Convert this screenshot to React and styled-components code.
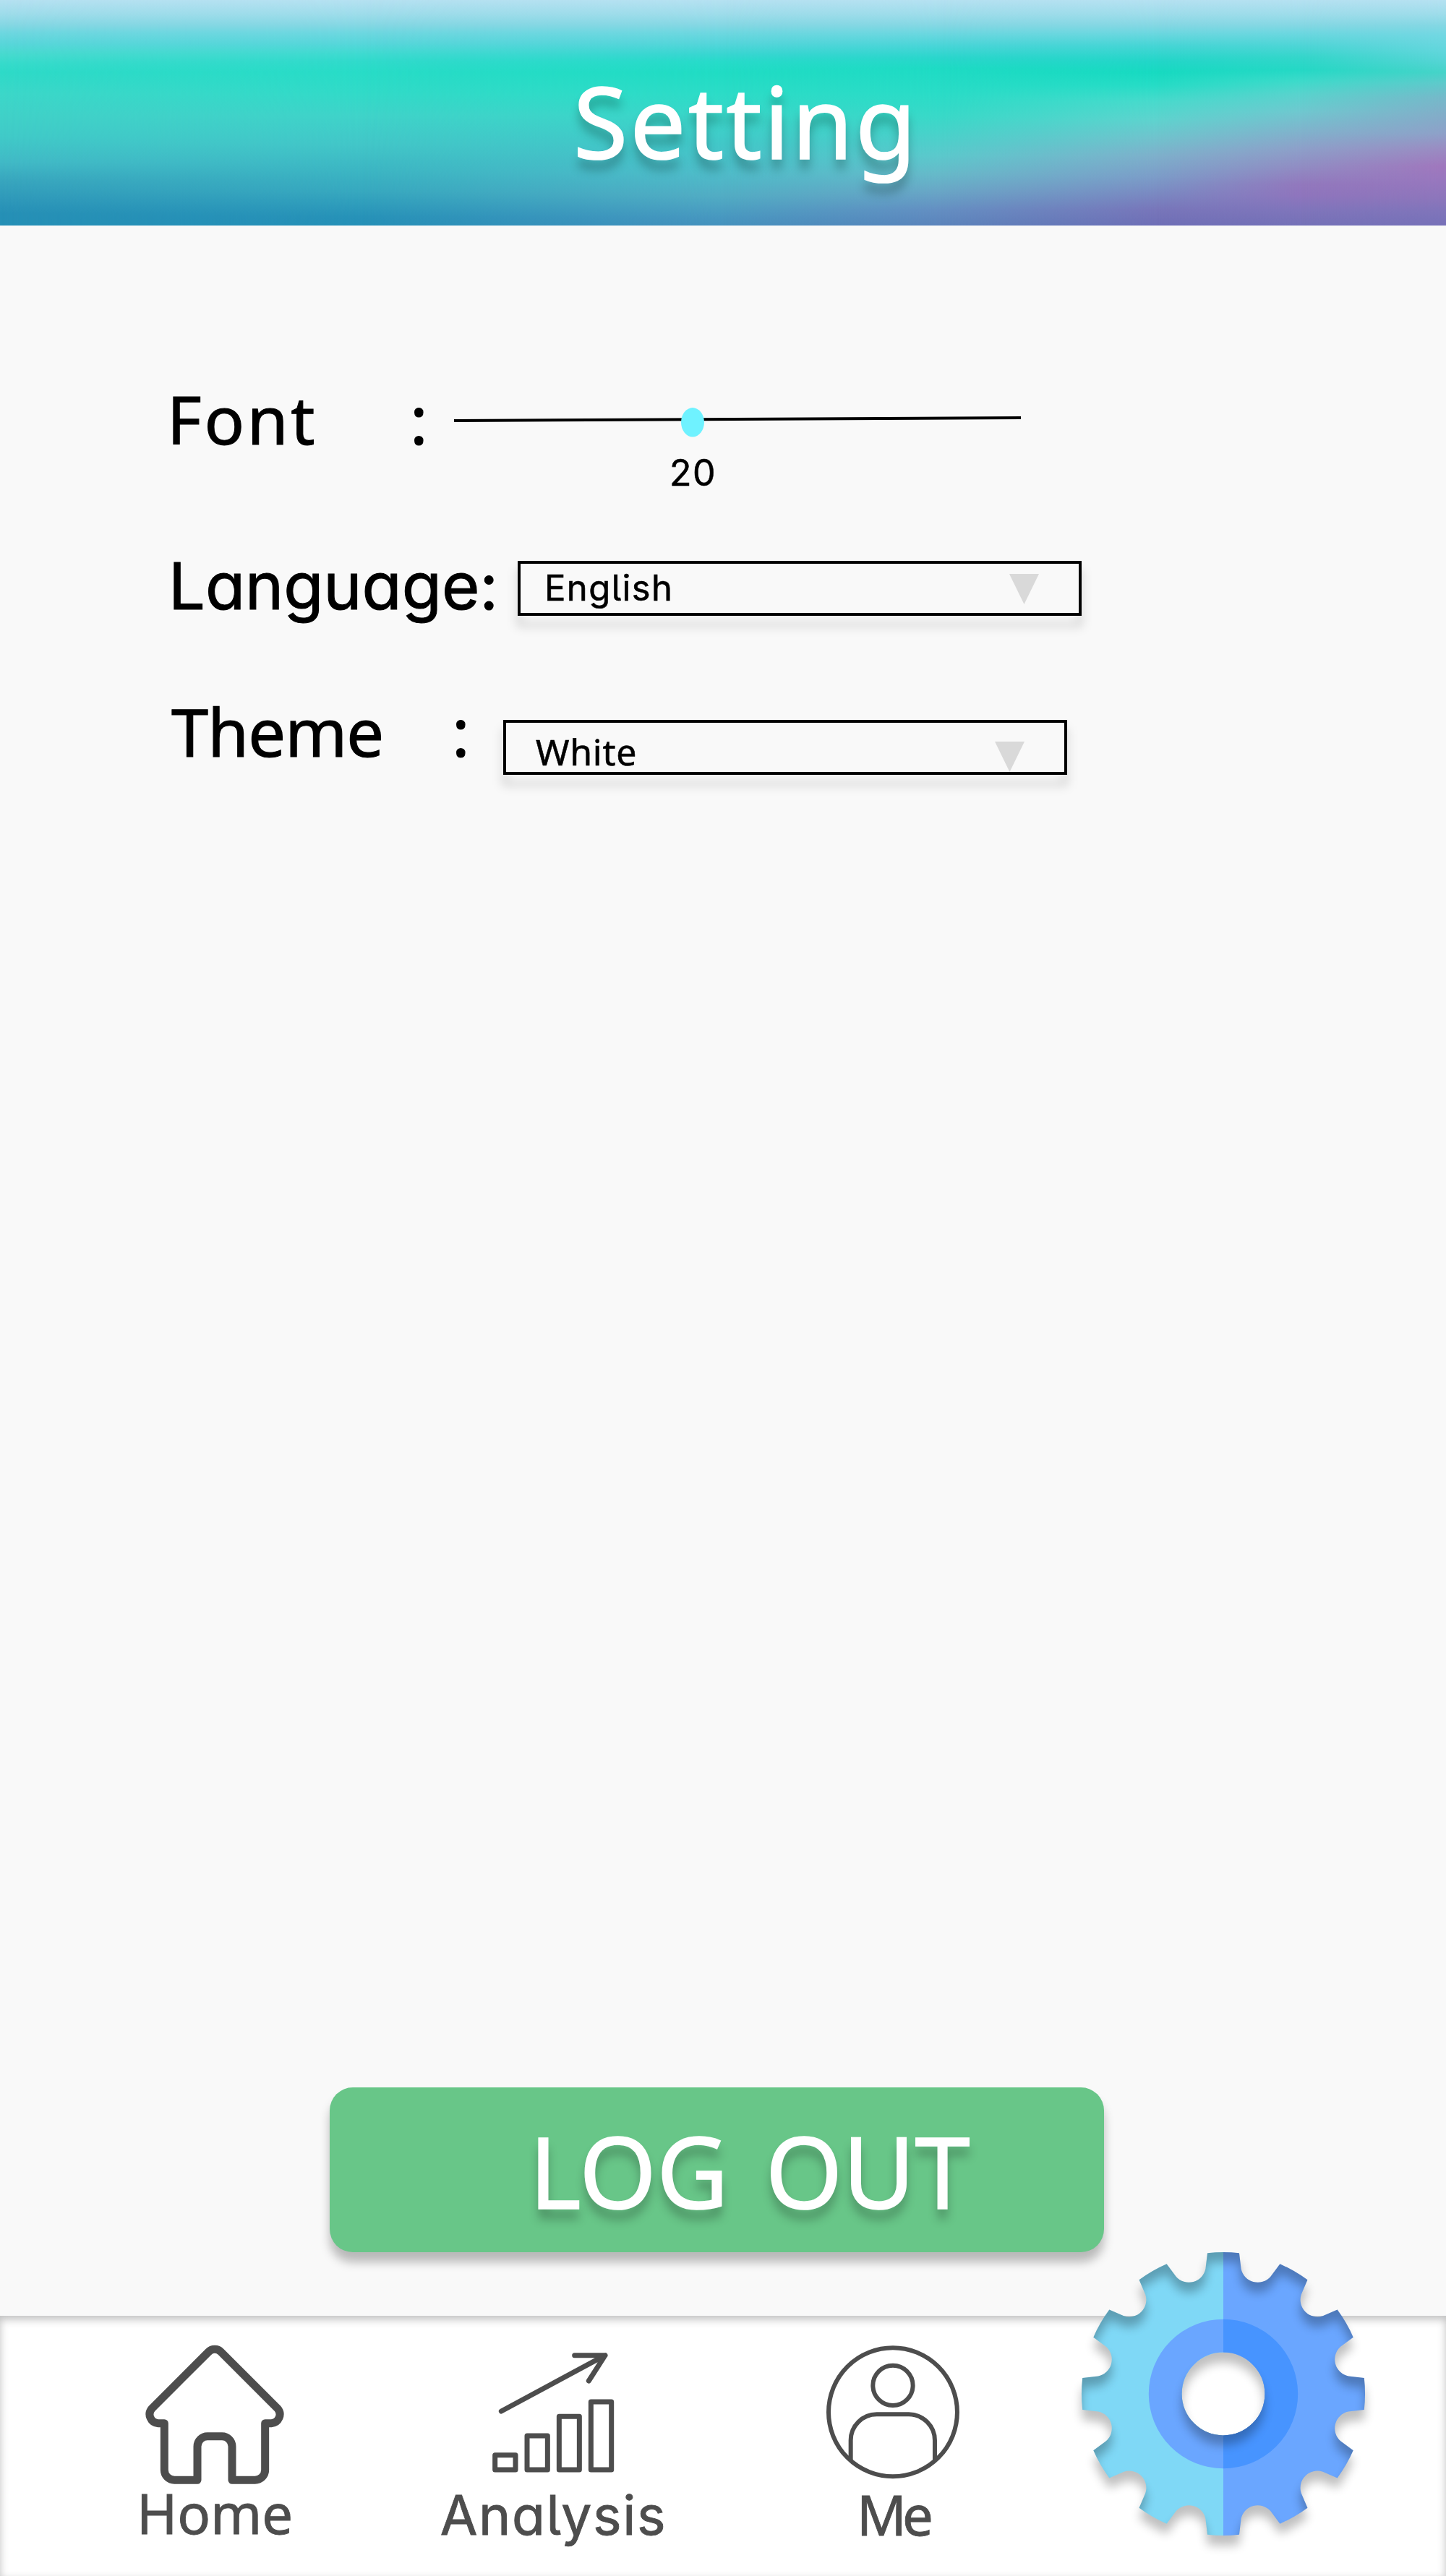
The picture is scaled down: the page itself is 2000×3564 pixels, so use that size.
import React from "react";
import styled, { createGlobalStyle, css } from "styled-components";

const GlobalStyle = createGlobalStyle`
  *, *::before, *::after { box-sizing: border-box; }
  html, body { margin: 0; padding: 0; background: #f9f9f9; }
`;

const humanist = css`
  font-family: "Noto Sans", "Open Sans", sans-serif;
`;
/* Single-storey "a" and tailed "l" */
const geometric = css`
  font-family: Inter, "Noto Sans", sans-serif;
  font-feature-settings: "cv11" 1, "cv05" 1;
`;

const Text = styled.span`
  ${(p) => (p.$alt ? geometric : humanist)}
  display: block;
  flex: none;
  white-space: nowrap;
  font-weight: 400;
  letter-spacing: ${(p) => p.$track || 0}px;
  -webkit-text-stroke: 0.012em currentColor;
`;

const Screen = styled.div`
  width: 2000px;
  height: 3564px;
  display: flex;
  flex-direction: column;
  overflow: hidden;
  background: #f9f9f9;
  color: #000;
`;

/* ---------- header ---------- */

const TOP = "#b5e1f1 0px, #9ddcea 20px, #84d7e3 35px, #6ed7e0 45px";

const bands = [
  { x: 0, stops: `${TOP}, #59d6da 60px, #47dacf 75px, #36dbcb 88px, #2edac8 100px, #3cd7c9 130px, #40d1c8 160px, #40cac8 190px, #41b9c6 225px, #38a6be 250px, #2f99ba 275px, #2690b6 295px, #2590b6 312px` },
  { x: 500, stops: `${TOP}, #57d6da 60px, #3edad0 75px, #30dacb 85px, #28dcc7 100px, #32dac8 130px, #3fd3c9 160px, #42c6c8 200px, #3cb6c3 235px, #37a8bf 265px, #2792b8 300px, #2590b7 312px` },
  { x: 1000, stops: `${TOP}, #55d5da 60px, #38d6d1 75px, #27dbca 85px, #20dcc4 100px, #2cdcc7 130px, #3ad6c9 160px, #42c7c8 200px, #4fbcc9 240px, #52adc4 270px, #4898c0 300px, #4592bd 312px` },
  { x: 1300, stops: `${TOP}, #4bd5d8 62px, #2ad6cc 80px, #1edbc4 95px, #2adcc7 130px, #38d9c8 160px, #48d2ca 185px, #5bc9cc 215px, #66bac9 240px, #69a6c6 265px, #648fc2 290px, #5b84bb 312px` },
  { x: 1600, stops: `${TOP}, #46d5d5 63px, #22d6c8 85px, #17dac1 100px, #26dcc6 118px, #48dacc 140px, #5ed3ce 165px, #70c3cd 190px, #7eb0cb 215px, #7c9cc8 245px, #7a87c1 270px, #7876ba 290px, #6e6eb6 312px` },
  { x: 1800, stops: `${TOP}, #4ed5d6 63px, #33d6ca 80px, #25d8c5 97px, #3ddaca 112px, #59d3cd 130px, #70c7cf 155px, #7fb4cc 180px, #8da0c9 205px, #918dc3 230px, #9278bd 255px, #8f75bd 270px, #8075bb 290px, #7471b7 312px` },
  { x: 2000, stops: `#b5e1f1 0px, #9ddcea 20px, #84d7e3 35px, #72d7e2 48px, #62d6dc 70px, #55d4d4 85px, #46d3c8 100px, #5fc9cb 115px, #76b8c9 135px, #83acc8 160px, #8ea0c8 185px, #9a8cc2 205px, #a077bd 230px, #9877be 250px, #8c76bb 275px, #7e74ba 295px, #7771b8 312px` },
];

const Header = styled.header`
  position: relative;
  flex: none;
  height: 312px;
  padding-left: 793px;
  overflow: hidden;
`;

const Band = styled.div`
  position: absolute;
  inset: 0;
  background: linear-gradient(to bottom, ${(p) => p.$stops});
  ${(p) =>
    p.$to > 0 &&
    css`
      mask-image: linear-gradient(to right, transparent ${p.$from}px, #000 ${p.$to}px);
    `}
`;

const Title = styled(Text).attrs({ as: "h1" })`
  position: relative;
  margin: 0;
  padding-top: 69px;
  font-size: 137px;
  line-height: 197px;
  color: #fff;
  text-shadow: 0 14px 14px rgba(0, 0, 0, 0.27);
`;

/* ---------- form ---------- */

const Main = styled.main`
  flex: 1;
  display: flex;
  flex-direction: column;
  padding: 208px 0 88px;
`;

const Row = styled.div`
  display: flex;
  align-items: flex-start;
  height: ${(p) => p.$height}px;
  padding-left: ${(p) => p.$indent}px;
`;

const Label = styled(Text)`
  width: ${(p) => p.$width}px;
  font-size: ${(p) => (p.$alt ? 90 : 92)}px;
  line-height: 120px;
`;

const Slider = styled.div`
  width: 784px;
  margin-top: 44px;
`;

const Track = styled.svg`
  display: block;
  width: 784px;
  height: 41px;
`;

const SliderValue = styled(Text)`
  margin: 19px 0 0 298px;
  font-size: 50px;
  line-height: 60px;
`;

const Select = styled.div`
  position: relative;
  z-index: 0;
  flex: none;
  display: flex;
  align-items: flex-start;
  justify-content: space-between;
  width: 780px;
  height: 76px;
  margin-top: ${(p) => p.$top}px;
  padding: 0 55px 0 ${(p) => p.$inset}px;
  border: 4px solid #000;
  background: #f9f9f9;

  &::before {
    content: "";
    position: absolute;
    inset: -4px;
    z-index: -2;
    border: 4px solid rgba(0, 0, 0, 0.25);
    transform: translateY(14px);
    filter: blur(7px);
  }
  &::after {
    content: "";
    position: absolute;
    inset: 0;
    z-index: -1;
    background: #f9f9f9;
  }
`;

const SelectValue = styled(Text)`
  margin-top: ${(p) => p.$drop}px;
  font-size: ${(p) => (p.$alt ? 49 : 50)}px;
  line-height: 60px;
`;

const Caret = styled.svg`
  display: block;
  width: 41px;
  height: 42px;
  margin-top: ${(p) => p.$drop}px;
  fill: #d9d9d9;
`;

const LogoutButton = styled.button`
  display: flex;
  align-items: flex-start;
  width: 1071px;
  height: 228px;
  margin: auto 0 0 456px;
  padding: 1px 0 0 276px;
  border: 0;
  border-radius: 32px;
  background: #68c688;
  box-shadow: 0 14px 14px rgba(0, 0, 0, 0.26);
`;

const LogoutText = styled(Text)`
  font-size: 137px;
  line-height: 228px;
  word-spacing: 15px;
  color: #fff;
  text-shadow: 0 14px 14px rgba(0, 0, 0, 0.27);
`;

/* ---------- navigation ---------- */

const Nav = styled.nav`
  flex: none;
  display: flex;
  align-items: flex-start;
  height: 360px;
  padding-left: 189px;
  background: #fff;
  box-shadow: inset 0 5px 12px rgba(0, 0, 0, 0.25);
`;

const NavItem = styled.a`
  flex: none;
  display: flex;
  flex-direction: column;
  align-items: center;
  width: ${(p) => p.$width}px;
  margin-left: ${(p) => p.$before || 0}px;
  padding-top: ${(p) => p.$top}px;
  gap: ${(p) => p.$gap}px;
  color: #4d4d4d;
`;

const NavIcon = styled.svg`
  display: block;
  width: ${(p) => p.$w}px;
  height: ${(p) => p.$h}px;
  fill: none;
  stroke: currentColor;
  stroke-linejoin: round;
  overflow: visible;
`;

const NavLabel = styled(Text)`
  font-size: ${(p) => (p.$alt ? 75 : 76)}px;
  line-height: 76px;
`;

const GearLink = styled.a`
  flex: none;
  margin: -88px 0 0 169px;
`;

const GearSvg = styled.svg`
  display: block;
  width: 392px;
  height: 392px;
  overflow: visible;
`;

/* Gear outline: twelve teeth separated by round notches. */
const rotate = ([x, y], deg) => {
  const a = (deg * Math.PI) / 180;
  return [x * Math.cos(a) - y * Math.sin(a), x * Math.sin(a) + y * Math.cos(a)]
    .map((n) => n.toFixed(2))
    .join(" ");
};

const gearPath =
  Array.from({ length: 12 }, (_, i) => {
    const d = i * 30;
    return [
      `${i ? "L" : "M"}${rotate([-22, -194.8], d)}`,
      `A196 196 0 0 1 ${rotate([22, -194.8], d)}`,
      `L${rotate([24.6, -173], d)}`,
      `A23.5 23.5 0 0 0 ${rotate([-24.6, -173], d + 30)}`,
    ].join(" ");
  }).join(" ") +
  " Z M57.4 0 A57.4 57.4 0 1 0 -57.4 0 A57.4 57.4 0 1 0 57.4 0 Z";

function Gear() {
  return (
    <GearSvg viewBox="-196 -196 392 392">
      <defs>
        <linearGradient id="gearBody" gradientUnits="userSpaceOnUse" x1="-196" x2="196" y1="0" y2="0">
          <stop offset="0.5" stopColor="#7fd8f6" />
          <stop offset="0.5" stopColor="#6aa6ff" />
        </linearGradient>
        <linearGradient id="gearRing" gradientUnits="userSpaceOnUse" x1="-196" x2="196" y1="0" y2="0">
          <stop offset="0.5" stopColor="#6aa6ff" />
          <stop offset="0.5" stopColor="#4794ff" />
        </linearGradient>
        <filter
          id="gearDepth"
          filterUnits="userSpaceOnUse"
          x="-240"
          y="-240"
          width="480"
          height="480"
          colorInterpolationFilters="sRGB"
        >
          <feOffset in="SourceAlpha" dy="14" result="moved" />
          <feGaussianBlur in="moved" stdDeviation="7" result="soft" />
          <feComponentTransfer in="soft" result="drop">
            <feFuncA type="linear" slope="0.25" />
          </feComponentTransfer>
          <feComponentTransfer in="soft" result="inverse">
            <feFuncA type="linear" slope="-0.27" intercept="0.27" />
          </feComponentTransfer>
          <feComposite in="inverse" in2="SourceAlpha" operator="in" result="inner" />
          <feMerge>
            <feMergeNode in="drop" />
            <feMergeNode in="SourceGraphic" />
            <feMergeNode in="inner" />
          </feMerge>
        </filter>
      </defs>
      <g filter="url(#gearDepth)">
        <path d={gearPath} fill="url(#gearBody)" fillRule="evenodd" />
        <circle r="80.3" fill="none" stroke="url(#gearRing)" strokeWidth="45.8" />
      </g>
    </GearSvg>
  );
}

function HomeIcon() {
  return (
    <NavIcon viewBox="121 194 576 576" $w={192} $h={192} strokeWidth="33">
      <path d="M200 517H174A37 37 0 0 1 148 456L383 221A36 36 0 0 1 435 221L670 456A37 37 0 0 1 644 517H618V711A42 42 0 0 1 576 753H481V613A42 42 0 0 0 439 571H379A42 42 0 0 0 337 613V753H242A42 42 0 0 1 200 711Z" />
    </NavIcon>
  );
}

function AnalysisIcon() {
  return (
    <NavIcon viewBox="300 220 506 504" $w={168.7} $h={168} strokeWidth="21" strokeLinecap="round">
      <path d="M337 469L768 237M641 237H768L700 343" />
      <path d="M311 651H396V712H311ZM444 571H529V712H444ZM577 491H661V712H577ZM709 430H794V712H709Z" />
    </NavIcon>
  );
}

function MeIcon() {
  return (
    <NavIcon viewBox="129 194 553 553" $w={184.3} $h={184.3} strokeWidth="18">
      <circle cx="405" cy="471" r="267" />
      <circle cx="405" cy="360" r="83" />
      <path d="M230 668V588A108 108 0 0 1 338 480H471A108 108 0 0 1 579 588V668" />
    </NavIcon>
  );
}

function Dropdown({ value, alt, track, top, inset, drop, caretDrop }) {
  return (
    <Select $top={top} $inset={inset}>
      <SelectValue $alt={alt} $track={track} $drop={drop}>
        {value}
      </SelectValue>
      <Caret viewBox="0 0 41 42" $drop={caretDrop}>
        <path d="M0 0H41L20.5 42Z" />
      </Caret>
    </Select>
  );
}

export default function App() {
  return (
    <Screen>
      <GlobalStyle />
      <Header>
        {bands.map((b, i) => (
          <Band key={b.x} $stops={b.stops} $from={i ? bands[i - 1].x : 0} $to={b.x} />
        ))}
        <Title $track={3.1}>Setting</Title>
      </Header>

      <Main>
        <Row $height={231} $indent={231}>
          <Label $width={336} $track={3.7}>Font</Label>
          <Label $width={61}>:</Label>
          <Slider>
            <Track viewBox="0 0 784 41">
              <line x1="0" y1="18" x2="784" y2="14" stroke="#000" strokeWidth="4" />
              <ellipse cx="330" cy="20.3" rx="16" ry="20.2" fill="#6ff2ff" />
            </Track>
            <SliderValue $alt $track={1.5}>20</SliderValue>
          </Slider>
        </Row>
        <Row $height={201} $indent={233}>
          <Label $alt $width={483} $track={0}>Language:</Label>
          <Dropdown value="English" alt track={1.4} top={25} inset={33} drop={4} caretDrop={14} />
        </Row>
        <Row $height={201} $indent={237}>
          <Label $width={388} $track={-0.9}>Theme</Label>
          <Label $width={71}>:</Label>
          <Dropdown value="White" track={0.7} top={44} inset={41} drop={10} caretDrop={26} />
        </Row>
        <LogoutButton>
          <LogoutText>LOG OUT</LogoutText>
        </LogoutButton>
      </Main>

      <Nav>
        <NavItem $width={216} $top={40.7} $gap={2.5}>
          <HomeIcon />
          <NavLabel>Home</NavLabel>
        </NavItem>
        <NavItem $width={315} $before={203} $top={49.3} $gap={21}>
          <AnalysisIcon />
          <NavLabel $alt $track={1.6}>Analysis</NavLabel>
        </NavItem>
        <NavItem $width={184} $before={220} $top={40.7} $gap={12.5}>
          <MeIcon />
          <NavLabel $track={-6}>Me</NavLabel>
        </NavItem>
        <GearLink>
          <Gear />
        </GearLink>
      </Nav>
    </Screen>
  );
}
